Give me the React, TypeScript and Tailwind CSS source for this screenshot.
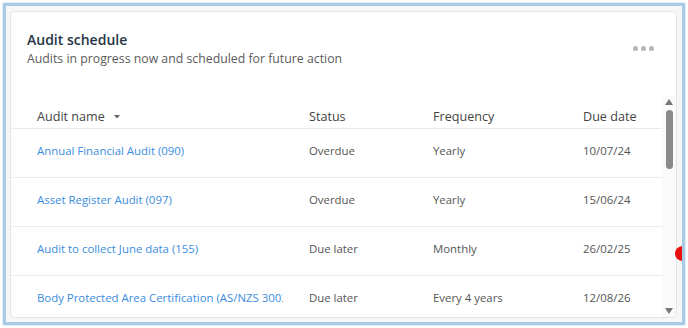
import React from 'react';

type Audit = {
  name: string;
  status: string;
  frequency: string;
  due: string;
};

const audits: Audit[] = [
  { name: 'Annual Financial Audit (090)', status: 'Overdue', frequency: 'Yearly', due: '10/07/24' },
  { name: 'Asset Register Audit (097)', status: 'Overdue', frequency: 'Yearly', due: '15/06/24' },
  { name: 'Audit to collect June data (155)', status: 'Due later', frequency: 'Monthly', due: '26/02/25' },
  {
    name: 'Body Protected Area Certification (AS/NZS 3003:2018) (201)',
    status: 'Due later',
    frequency: 'Every 4 years',
    due: '12/08/26',
  },
];

const cols = 'grid grid-cols-[272px_124px_150px_1fr] pl-[26px]';

export default function App() {
  return (
    <div className="w-[688px] h-[328px] bg-white p-[3px] font-['Open_Sans',sans-serif]">
      {/* Outer frame */}
      <div className="relative h-[322px] overflow-hidden border-[3px] border-[#a7cce4] bg-[#f6f6f6] pt-[5px] pl-[4px] pr-[5px] pb-[4px] shadow-[0_0_2px_rgba(120,170,210,0.6)]">
        {/* Card */}
        <div className="flex h-full flex-col overflow-hidden rounded-[5px] border border-[#e4e4e4] bg-white">
          {/* Header */}
          <div className="flex items-start justify-between pl-4 pr-[22px] pt-[17px]">
            <div>
              <h2 className="text-[14px] font-semibold leading-[21px] text-[#263545]">Audit schedule</h2>
              <p className="text-[12.3px] leading-[18px] text-[#5b5b5b]">
                Audits in progress now and scheduled for future action
              </p>
            </div>
            <div className="mt-[17px] flex gap-[3px]">
              <span className="h-[5px] w-[5px] rounded-full bg-[#b5b5b5]" />
              <span className="h-[5px] w-[5px] rounded-full bg-[#b5b5b5]" />
              <span className="h-[5px] w-[5px] rounded-full bg-[#b5b5b5]" />
            </div>
          </div>

          {/* Table + scrollbar */}
          <div className="mt-[28px] flex min-h-0 flex-1">
            <div className="flex-1 overflow-hidden">
              <div className={`${cols} h-[33px] items-end border-b border-[#ebebeb] pb-[2px] text-[12.6px] font-medium leading-[18px] text-[#444]`}>
                <div className="flex items-center gap-[9px]">
                  Audit name
                  <svg width="6" height="4" viewBox="0 0 6 4">
                    <path d="M0 0 L6 0 L3 3.5 Z" fill="#666" />
                  </svg>
                </div>
                <div>Status</div>
                <div>Frequency</div>
                <div>Due date</div>
              </div>
              {audits.map(a => (
                <div
                  key={a.name}
                  className={`${cols} h-[49px] shrink-0 items-center border-b border-[#ebebeb] pb-[4px] text-[11.4px] leading-[18px] text-[#555]`}
                >
                  <div className="w-[246px] overflow-hidden whitespace-nowrap text-[#3a8de0]">{a.name}</div>
                  <div>{a.status}</div>
                  <div>{a.frequency}</div>
                  <div>{a.due}</div>
                </div>
              ))}
            </div>

            {/* Scrollbar */}
            <div className="flex w-[14px] flex-col items-center bg-[#fafafa] pt-[3px] pb-[3px]">
              <svg width="8" height="6" viewBox="0 0 8 6">
                <path d="M0 6 L4 0 L8 6 Z" fill="#777" />
              </svg>
              <div className="mt-[5px] h-[59px] w-[7px] rounded-full bg-[#8a8a8a]" />
              <div className="flex-1" />
              <svg width="8" height="6" viewBox="0 0 8 6">
                <path d="M0 0 L8 0 L4 6 Z" fill="#777" />
              </svg>
            </div>
          </div>
        </div>

        {/* Red notification dot, clipped by the frame */}
        <div className="absolute left-[669px] top-[240px] h-[15px] w-[15px] rounded-full bg-[#e8120c]" />
      </div>
    </div>
  );
}
